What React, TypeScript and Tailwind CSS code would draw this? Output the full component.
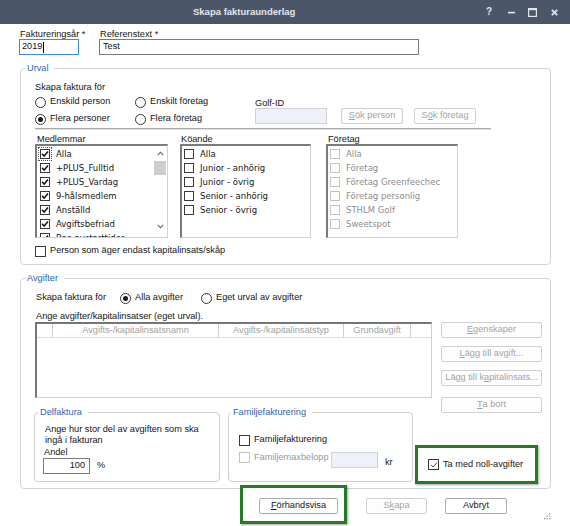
import React from "react";

function Check({
  checked = false,
  disabled = false,
  small = false,
  thin = false,
}: {
  checked?: boolean;
  disabled?: boolean;
  small?: boolean;
  thin?: boolean;
}) {
  return (
    <span
      className={`${small ? "w-[10px] h-[10px]" : "w-[11px] h-[11px]"} inline-flex shrink-0 items-center justify-center border bg-white ${
        disabled ? "border-[#c2c2c2]" : "border-[#3a3a3a]"
      }`}
    >
      {checked && (
        <svg viewBox="0 0 10 10" className="w-[8px] h-[8px]">
          <path
            d="M1.3 4.8 L3.9 7.6 L8.8 1.8"
            fill="none"
            stroke="#151515"
            strokeWidth={thin ? 1 : 1.8}
          />
        </svg>
      )}
    </span>
  );
}

function Radio({ checked = false }: { checked?: boolean }) {
  return (
    <span className="w-[11px] h-[11px] rounded-full border border-[#333] bg-white inline-flex items-center justify-center shrink-0">
      {checked && <span className="w-[5px] h-[5px] rounded-full bg-[#1b1b1b]" />}
    </span>
  );
}

function Btn({
  children,
  disabled = false,
  className = "",
}: {
  children: React.ReactNode;
  disabled?: boolean;
  className?: string;
}) {
  return (
    <div
      className={`h-[16px] shrink-0 flex items-center justify-center border rounded-[2px] whitespace-nowrap ${
        disabled
          ? "border-[#d0d0d0] text-[#a4a4a4] bg-[#fdfdfd]"
          : "border-[#ababab] text-[#141414] bg-white"
      } ${className}`}
    >
      {children}
    </div>
  );
}

function Chevron({ up }: { up?: boolean }) {
  return (
    <svg width="7" height="5" viewBox="0 0 7 5">
      <path
        d={up ? "M0.7 4.2 L3.5 1.2 L6.3 4.2" : "M0.7 0.8 L3.5 3.8 L6.3 0.8"}
        fill="none"
        stroke="#606060"
        strokeWidth="1.1"
      />
    </svg>
  );
}

function ListBox({
  items,
  checked = false,
  disabled = false,
  scroll = false,
  focusFirst = false,
  pad = "pl-[2px]",
}: {
  items: string[];
  checked?: boolean;
  disabled?: boolean;
  scroll?: boolean;
  focusFirst?: boolean;
  pad?: string;
}) {
  return (
    <div className="h-[94px] border-t-2 border-l-2 border-t-[#7b7b7b] border-l-[#7b7b7b] border-r border-b border-r-[#d2d2d2] border-b-[#d2d2d2] bg-white flex overflow-hidden font-['DejaVu_Sans',Verdana,sans-serif] text-[8.5px]">
      <div className={`flex-1 pt-[1px] overflow-hidden ${pad}`}>
        {items.map((t, i) => (
          <div
            key={i}
            className={`h-[14px] flex items-center gap-[6px] whitespace-nowrap ${
              disabled ? "text-[#8d8d8d]" : "text-[#161616]"
            }`}
          >
            <span
              className={`inline-flex ${
                focusFirst && i === 0 ? "outline outline-1 outline-dotted outline-[#555] outline-offset-[1px]" : ""
              }`}
            >
              <Check small checked={checked} disabled={disabled} />
            </span>
            <span>{t}</span>
          </div>
        ))}
      </div>
      {scroll && (
        <div className="w-[14px] shrink-0 flex flex-col items-center">
          <div className="h-[14px] flex items-center justify-center">
            <Chevron up />
          </div>
          <div className="mt-[1px] w-[12px] h-[14px] bg-[#cdcdcd]" />
          <div className="flex-1" />
          <div className="h-[14px] mb-[4px] flex items-center justify-center">
            <Chevron />
          </div>
        </div>
      )}
    </div>
  );
}

const medlemmar = [
  "Alla",
  "+PLUS_Fulltid",
  "+PLUS_Vardag",
  "9-hålsmedlem",
  "Anställd",
  "Avgiftsbefriad",
  "Bas-avstarttider",
];
const koande = ["Alla", "Junior - anhörig", "Junior - övrig", "Senior - anhörig", "Senior - övrig"];
const foretag = ["Alla", "Företag", "Företag Greenfeechec", "Företag personlig", "STHLM Golf", "Sweetspot"];

export default function App() {
  return (
    <div className="w-[570px] h-[526px] bg-white overflow-hidden font-['Liberation_Sans',Arial,sans-serif] text-[9.2px] leading-none text-[#141414] flex flex-col">
      {/* Title bar */}
      <div className="h-[24px] shrink-0 bg-[#4b5769] flex items-center text-[#e3e6eb]">
        <span className="ml-[193px] font-bold text-[9.5px]">Skapa fakturaunderlag</span>
        <div className="ml-auto mr-[12px] flex items-center">
          <span className="font-bold text-[10px] w-[6px]">?</span>
          <svg className="ml-[16px]" width="7" height="7" viewBox="0 0 7 7">
            <rect x="0" y="2.8" width="7" height="1.6" fill="#e3e6eb" />
          </svg>
          <svg className="ml-[13px]" width="9" height="9" viewBox="0 0 9 9">
            <rect x="0.6" y="0.6" width="7.8" height="7.8" fill="none" stroke="#e3e6eb" strokeWidth="1.2" />
            <rect x="0" y="0" width="9" height="2.2" fill="#e3e6eb" />
          </svg>
          <svg className="ml-[14px]" width="7" height="7" viewBox="0 0 7 7">
            <path d="M0.8 0.8 L6.2 6.2 M6.2 0.8 L0.8 6.2" stroke="#e3e6eb" strokeWidth="1.7" />
          </svg>
        </div>
      </div>

      <div className="pl-[19px] pr-[19px] flex flex-col">
        {/* Row 1 */}
        <div className="mt-[5px] flex">
          <div className="w-[60px] flex flex-col">
            <div className="h-[10px] leading-[10px] pl-[1px] whitespace-nowrap">Faktureringsår *</div>
            <div className="h-[16px] border border-[#3b8bdc] flex items-center pl-[2px]">
              2019
              <span className="w-px h-[11px] bg-black ml-[1px]" />
            </div>
          </div>
          <div className="ml-[20px] w-[320px] flex flex-col">
            <div className="h-[10px] leading-[10px] pl-[1px]">Referenstext *</div>
            <div className="h-[16px] border border-[#7a7a7a] flex items-center pl-[3px]">Test</div>
          </div>
        </div>

        {/* Urval */}
        <fieldset className="mt-[7px] ml-[1px] w-[531px] border border-[#d3d3d3] rounded-[4px] pb-[6px]">
          <legend className="ml-[4px] pl-[2px] pr-[6px] h-[12px] leading-[12px] text-[#2d64b3]">Urval</legend>
          <div className="pl-[14px]">
            <div className="mt-[7px] flex">
              <div className="w-[220px]">
                <div className="h-[12px] leading-[12px]">Skapa faktura för</div>
                <div className="mt-[1px] h-[16px] flex items-center">
                  <div className="w-[100px] flex items-center gap-[4px]">
                    <Radio />
                    Enskild person
                  </div>
                  <div className="flex items-center gap-[4px]">
                    <Radio />
                    Enskilt företag
                  </div>
                </div>
                <div className="mt-[1px] h-[16px] flex items-center">
                  <div className="w-[100px] flex items-center gap-[4px]">
                    <Radio checked />
                    Flera personer
                  </div>
                  <div className="flex items-center gap-[4px]">
                    <Radio />
                    Flera företag
                  </div>
                </div>
              </div>
              <div className="flex flex-col justify-end pb-[3px]">
                <div className="h-[10px] leading-[10px]">Golf-ID</div>
                <div className="flex">
                  <div className="w-[72px] h-[16px] border border-[#cfd2dc] bg-[#eef0fa]" />
                  <Btn disabled className="ml-[14px] w-[62px]">
                    <u>S</u>ök person
                  </Btn>
                  <Btn disabled className="ml-[11px] w-[62px]">
                    S<u>ö</u>k företag
                  </Btn>
                </div>
              </div>
            </div>
            <div className="mt-[1px] w-[456px] h-[2px] border-t border-b border-t-[#a9a9a9] border-b-[#e2e2e2]" />

            <div className="mt-[4px] flex">
              <div className="w-[133px]">
                <div className="h-[10px] leading-[10px] pl-[2px]">Medlemmar</div>
                <ListBox items={medlemmar} checked scroll focusFirst pad="pl-[3px]" />
              </div>
              <div className="ml-[12px] w-[131px]">
                <div className="h-[10px] leading-[10px] pl-[1px]">Köande</div>
                <ListBox items={koande} pad="pl-[2px]" />
              </div>
              <div className="ml-[15px] w-[132px]">
                <div className="h-[10px] leading-[10px] pl-[2px]">Företag</div>
                <ListBox items={foretag} disabled pad="pl-[2px]" />
              </div>
            </div>

            <div className="mt-[6px] h-[14px] flex items-center gap-[4px]">
              <Check />
              Person som äger endast kapitalinsats/skåp
            </div>
          </div>
        </fieldset>

        {/* Avgifter */}
        <fieldset className="mt-[7px] ml-[1px] w-[531px] border border-[#d3d3d3] rounded-[4px] pb-[4px]">
          <legend className="ml-[4px] pl-[2px] pr-[6px] h-[12px] leading-[12px] text-[#2d64b3]">Avgifter</legend>
          <div className="pl-[14px]">
            <div className="mt-[6px] h-[16px] flex items-center pl-[1px]">
              <div className="w-[84px]">Skapa faktura för</div>
              <div className="w-[81px] flex items-center gap-[4px]">
                <Radio checked />
                Alla avgifter
              </div>
              <div className="flex items-center gap-[4px]">
                <Radio />
                Eget urval av avgifter
              </div>
            </div>
            <div className="mt-[5px] h-[10px] leading-[10px] pl-[1px]">
              Ange avgifter/kapitalinsatser (eget urval).
            </div>
            <div className="mt-[1px] flex items-start">
              <div className="w-[397px] h-[76px] border-t-2 border-l-2 border-t-[#767676] border-l-[#767676] border-r border-b border-r-[#d0d0d0] border-b-[#d0d0d0] bg-white">
                <div className="h-[14px] flex border-b border-[#dadada] text-[#a2a2a2]">
                  <div className="w-[16px] border-r border-[#cfcfcf]" />
                  <div className="w-[166px] border-r border-[#cfcfcf] flex items-center justify-center">
                    Avgifts-/kapitalinsatsnamn
                  </div>
                  <div className="w-[125px] border-r border-[#cfcfcf] flex items-center justify-center">
                    Avgifts-/kapitalinsatstyp
                  </div>
                  <div className="w-[67px] border-r border-[#cfcfcf] flex items-center justify-center">
                    Grundavgift
                  </div>
                  <div className="flex-1" />
                </div>
              </div>
              <div className="ml-[9px] w-[101px] flex flex-col">
                <Btn disabled className="w-[101px]">
                  <u>E</u>genskaper
                </Btn>
                <Btn disabled className="mt-[8px] w-[101px]">
                  <u>L</u>ägg till avgift...
                </Btn>
                <Btn disabled className="mt-[8px] w-[101px]">
                  Lägg till k<u>a</u>pitalinsats...
                </Btn>
                <Btn disabled className="mt-[11px] w-[101px]">
                  <u>T</u>a bort
                </Btn>
              </div>
            </div>

            <div className="-mt-[7px] -ml-[1px] flex items-start">
              <fieldset className="w-[186px] h-[76px] border border-[#cfcfcf] rounded-[4px]">
                <legend className="ml-[3px] pl-[2px] pr-[6px] h-[12px] leading-[12px] text-[#2d64b3]">
                  Delfaktura
                </legend>
                <div className="pl-[10px]">
                  <div className="mt-[6px] leading-[11px] whitespace-nowrap">
                    Ange hur stor del av avgiften som ska
                    <br />
                    ingå i fakturan
                  </div>
                  <div className="mt-[1px] -ml-[1px] h-[10px] leading-[10px]">Andel</div>
                  <div className="mt-[1px] -ml-[2px] flex items-center">
                    <div className="w-[47px] h-[16px] border border-[#7a7a7a] flex items-center justify-end pr-[4px]">
                      100
                    </div>
                    <span className="ml-[7px]">%</span>
                  </div>
                </div>
              </fieldset>
              <fieldset className="ml-[8px] w-[185px] h-[76px] border border-[#cfcfcf] rounded-[4px]">
                <legend className="ml-[2px] pl-[2px] pr-[6px] h-[12px] leading-[12px] text-[#2d64b3]">
                  Familjefakturering
                </legend>
                <div className="pl-[10px]">
                  <div className="mt-[15px] h-[14px] flex items-center gap-[4px]">
                    <Check />
                    Familjefakturering
                  </div>
                  <div className="mt-[5px] flex items-start">
                    <div className="w-[92px] flex items-center gap-[4px] text-[#9a9a9a]">
                      <Check disabled />
                      Familjemaxbelopp
                    </div>
                    <div className="w-[47px] h-[16px] border border-[#cfd2dc] bg-[#eef0fa]" />
                    <span className="ml-[7px] mt-[6px]">kr</span>
                  </div>
                </div>
              </fieldset>
              <div className="ml-[2px] mt-[39px] w-[123px] h-[39px] border-[3px] border-[#277a27] shadow-[1px_1px_2px_rgba(0,0,0,0.35)] flex items-center pl-[10px] gap-[4px] whitespace-nowrap">
                <Check checked thin />
                Ta med noll-avgifter
              </div>
            </div>
          </div>
        </fieldset>

        {/* Bottom buttons */}
        <div className="-mt-[4px] flex items-start">
          <div className="ml-[221px] relative z-10 bg-white w-[120px] h-[39px] border-[3px] border-[#277a27] shadow-[1px_1px_2px_rgba(0,0,0,0.35)] pl-[16px] pt-[10px]">
            <Btn className="w-[79px]">
              <u>F</u>örhandsvisa
            </Btn>
          </div>
          <Btn disabled className="ml-[19px] mt-[13px] w-[61px]">
            S<u>k</u>apa
          </Btn>
          <Btn className="ml-[18px] mt-[13px] w-[62px]">Avbryt</Btn>
          <svg className="ml-[37px] mt-[28px] shrink-0" width="7" height="7" viewBox="0 0 7 7">
            <rect x="5" y="0" width="1.3" height="1.3" fill="#9a9a9a" />
            <rect x="2.5" y="2.5" width="1.3" height="1.3" fill="#9a9a9a" />
            <rect x="5" y="2.5" width="1.3" height="1.3" fill="#9a9a9a" />
            <rect x="0" y="5" width="1.3" height="1.3" fill="#9a9a9a" />
            <rect x="2.5" y="5" width="1.3" height="1.3" fill="#9a9a9a" />
            <rect x="5" y="5" width="1.3" height="1.3" fill="#9a9a9a" />
          </svg>
        </div>
      </div>
    </div>
  );
}
